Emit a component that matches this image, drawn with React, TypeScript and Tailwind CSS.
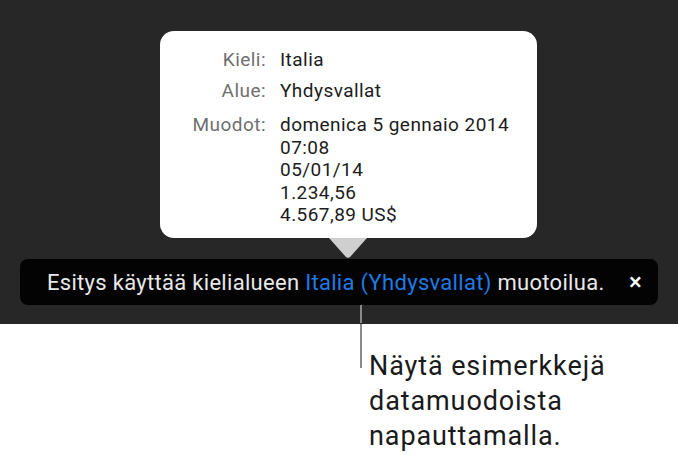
const rows: { label: string; values: string[] }[] = [
  { label: "Kieli:", values: ["Italia"] },
  { label: "Alue:", values: ["Yhdysvallat"] },
  { label: "Muodot:", values: ["domenica 5 gennaio 2014", "07:08", "05/01/14", "1.234,56", "4.567,89 US$"] },
];

const Popover = () => (
  <div className="ml-[160px] w-[377px] h-[207px] bg-white rounded-[14px] pt-[18px] flex flex-col text-[19px] leading-[22.5px] tracking-[0.45px]">
    {rows.map((row, i) => (
      <div key={row.label} className={`flex gap-[14px] ${i === 1 ? "mt-[8.5px]" : i === 2 ? "mt-[11.5px]" : ""}`}>
        <div className="w-[106px] text-right text-[#6f6f6f]">{row.label}</div>
        <div className="flex flex-col text-[#1c1c1c]">
          {row.values.map((v) => (
            <span key={v}>{v}</span>
          ))}
        </div>
      </div>
    ))}
  </div>
);

export default function App() {
  return (
    <div
      className="w-[678px] h-[455px] bg-white flex flex-col overflow-hidden"
      style={{ fontFamily: "Roboto, 'Noto Sans', sans-serif" }}
    >
      {/* dark stage */}
      <div className="h-[324px] bg-[#272727] pt-[31px] flex flex-col shrink-0">
        <Popover />
        {/* pointer */}
        <svg className="ml-[329px] block" width="38" height="21" viewBox="0 0 38 21">
          <path d="M0 0 H38 L21.5 18.5 Q19 21 16.5 18.5 Z" fill="#cfcfcf" />
        </svg>
        <div className="mx-[20px] h-[46px] bg-[#030303] rounded-[8px] flex items-center pl-[27px] pr-[16px] text-[#e8e8e8] text-[22px] tracking-[0.3px]">
          <span>
            Esitys käyttää kielialueen <span className="text-[#1f7ae6]">Italia (Yhdysvallat)</span> muotoilua.
          </span>
          <span className="ml-auto text-[24px] font-medium text-white leading-none">×</span>
        </div>
        <div className="ml-[360px] w-[2px] h-[18px] bg-[#8a8a8a]" />
      </div>

      {/* callout */}
      <div className="flex">
        <div className="ml-[360px] w-[2px] h-[44px] bg-[#8a8a8a]" />
        <div className="ml-[7px] mt-[25px] text-[27px] leading-[35px] tracking-[0.9px] text-[#1a1a1a]">
          Näytä esimerkkejä
          <br />
          datamuodoista
          <br />
          napauttamalla.
        </div>
      </div>
    </div>
  );
}
